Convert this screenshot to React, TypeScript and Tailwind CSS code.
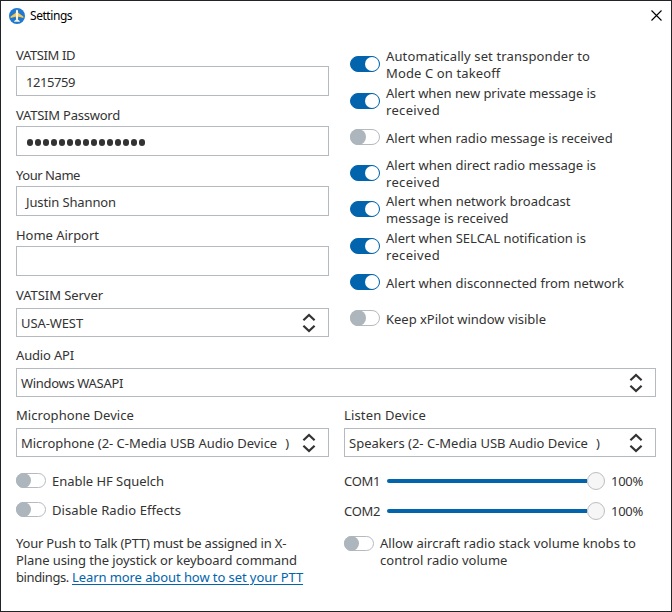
import type { ReactNode } from "react";

function Label({ children, className = "" }: { children: ReactNode; className?: string }) {
  return <div className={`h-[17px] whitespace-nowrap pt-px leading-[17px] ${className}`}>{children}</div>;
}

function TextField({ label, labelClass, children }: { label: string; labelClass: string; children?: ReactNode }) {
  return (
    <div className="flex h-[60px] flex-col gap-[3px]">
      <Label className={labelClass}>{label}</Label>
      <div className="flex h-[30px] w-[313px] items-center border border-[#b4bac0] pt-[3px] pl-[9px]">{children}</div>
    </div>
  );
}

function Chevrons() {
  return (
    <svg width="14" height="20" viewBox="0 0 14 20" fill="none" stroke="#333" strokeWidth="2.2">
      <path d="M1.4 7.2 L7 1.9 L12.6 7.2" />
      <path d="M1.4 12.8 L7 18.1 L12.6 12.8" />
    </svg>
  );
}

function SelectField({ label, labelClass = "", children }: { label: string; labelClass?: string; children: ReactNode }) {
  return (
    <div className="flex h-[60px] w-full flex-col gap-[5px]">
      <Label className={labelClass}>{label}</Label>
      <div className="flex h-[29px] items-center justify-between border border-[#b4bac0] pr-[12px] pl-1">
        <span className="flex whitespace-pre pt-[2px] leading-[17px]">{children}</span>
        <Chevrons />
      </div>
    </div>
  );
}

function Toggle({ on = false, short = false }: { on?: boolean; short?: boolean }) {
  return (
    <div
      className={`flex w-[30px] shrink-0 items-center rounded-full border ${short ? "h-[15px]" : "h-4"} ${
        on ? "justify-end border-[#0164ad] bg-[#0164ad]" : "justify-start border-[#b4bac0] bg-white"
      }`}
    >
      <div
        className={`shrink-0 rounded-full ${
          on ? "size-[14px] bg-white" : short ? "-ml-px size-[15px] bg-[#adb5bd]" : "-ml-px size-4 bg-[#adb5bd]"
        }`}
      />
    </div>
  );
}

function Option({ on, rowClass, textClass, children }: { on?: boolean; rowClass: string; textClass: string; children: ReactNode }) {
  return (
    <div className={`flex items-start gap-[6px] ${rowClass}`}>
      <div className="pt-[8px]">
        <Toggle on={on} />
      </div>
      <div className={`whitespace-nowrap leading-[17px] ${textClass}`}>{children}</div>
    </div>
  );
}

function Volume({ name }: { name: string }) {
  return (
    <div className="flex h-[30px] items-center">
      <span className="w-[43px] pt-px tracking-[-0.33px]">{name}</span>
      <div className="flex w-[218px] items-center">
        <div className="h-1 flex-1 rounded-l-full bg-[#0164ad]" />
        <div className="size-[18px] rounded-full border border-[#bdbebf] bg-[#f6f6f6]" />
      </div>
      <span className="ml-[6px] pt-px tracking-[-0.28px]">100%</span>
    </div>
  );
}

export default function App() {
  return (
    <div className="flex h-[612px] w-[672px] flex-col border border-[#222326] bg-white font-['Noto_Sans',sans-serif] text-[13px] leading-[17px] text-[#333]">
      <header className="flex h-[45px] items-start justify-between pt-[6px] pr-[9px] pl-2">
        <div className="flex items-center gap-[5px]">
          <svg width="16" height="16" viewBox="0 0 16 16">
            <circle cx="8" cy="8" r="8" fill="#1f78d1" />
            <path d="M7.2 8.6 L1.6 10 V8.6 L7.2 4.6 Z M8.8 8.6 L14.4 10 V8.6 L8.8 4.6 Z" fill="#f6c84c" />
            <path d="M8 1.5 C8.9 2 9.1 3 9.1 4 V9.5 L8.8 11.6 L10.8 13 V13.8 H5.2 V13 L7.2 11.6 L6.9 9.5 V4 C6.9 3 7.1 2 8 1.5 Z" fill="#fff4d6" />
          </svg>
          <span className="pt-px text-[12px] leading-[16px] tracking-[-0.44px] text-black">Settings</span>
        </div>
        <svg className="mt-[3px]" width="11" height="11" viewBox="0 0 11 11" stroke="#000" strokeWidth="1.1">
          <path d="M0.5 0.5 L10.5 10.5 M10.5 0.5 L0.5 10.5" />
        </svg>
      </header>

      <main className="flex flex-col px-[15px]">
        <div className="flex h-[300px] justify-between">
          <div className="w-[313px]">
            <TextField label="VATSIM ID" labelClass="tracking-[-0.39px]">
              <span className="tracking-[-0.44px]">1215759</span>
            </TextField>
            <TextField label="VATSIM Password" labelClass="tracking-[-0.23px]">
              <span className="flex gap-[2px] pl-[0.6px]">
                {Array.from({ length: 15 }, (_, i) => (
                  <i key={i} className="h-[6.6px] w-[6px] rounded-full bg-[#333]" />
                ))}
              </span>
            </TextField>
            <TextField label="Your Name" labelClass="tracking-[-0.45px]">
              <span className="tracking-[-0.12px]">Justin Shannon</span>
            </TextField>
            <TextField label="Home Airport" labelClass="tracking-[-0.03px]" />
            <SelectField label="VATSIM Server" labelClass="tracking-[-0.06px]">
              <span className="tracking-[-0.1px]">USA-WEST</span>
            </SelectField>
          </div>
          <div className="w-[306px] pt-[2px]">
            <Option on rowClass="h-[37px]" textClass="tracking-[0.12px]">Automatically set transponder to<br />Mode C on takeoff</Option>
            <Option on rowClass="h-[36px]" textClass="tracking-[-0.05px]">Alert when new private message is<br /><span className="tracking-[0.34px]">received</span></Option>
            <Option rowClass="h-[36px]" textClass="pt-[9px]">Alert when radio message is received</Option>
            <Option on rowClass="h-[36px]" textClass="">Alert when direct radio message is<br /><span className="tracking-[0.34px]">received</span></Option>
            <Option on rowClass="h-[37px]" textClass="tracking-[0.02px]">Alert when network broadcast<br />message is received</Option>
            <Option on rowClass="h-[36px]" textClass="tracking-[0.02px]">Alert when SELCAL notification is<br /><span className="tracking-[0.34px]">received</span></Option>
            <Option on rowClass="h-[36px]" textClass="pt-[9px] tracking-[0.01px]">Alert when disconnected from network</Option>
            <Option rowClass="h-[36px]" textClass="pt-[9px] tracking-[-0.02px]">Keep xPilot window visible</Option>
          </div>
        </div>

        <SelectField label="Audio API" labelClass="tracking-[-0.17px]">
          <span className="tracking-[-0.32px]">Windows WASAPI</span>
        </SelectField>

        <div className="grid grid-cols-[313px_312px] gap-[15px]">
          <SelectField label="Microphone Device" labelClass="tracking-[0.05px]">
            <span className="tracking-[-0.02px]">Microphone (2- C-Media USB Audio Device</span>
            <span className="ml-[8px]">)</span>
          </SelectField>
          <SelectField label="Listen Device" labelClass="tracking-[0.16px]">
            Speakers (2- C-Media USB Audio Device<span className="ml-[8px]">)</span>
          </SelectField>
        </div>

        <div className="grid grid-cols-[313px_312px] gap-[15px]">
          <div>
            <div className="flex h-[29px] items-center gap-[6px]">
              <Toggle short />
              <span className="pt-px tracking-[-0.03px]">Enable HF Squelch</span>
            </div>
            <div className="flex h-[29px] items-center gap-[6px]">
              <Toggle short />
              <span className="pt-px tracking-[0.09px]">Disable Radio Effects</span>
            </div>
            <p className="mt-[11px] whitespace-nowrap">
              <span className="tracking-[-0.2px]">Your Push to Talk (PTT) must be assigned in X-</span>
              <br />
              <span className="tracking-[-0.09px]">Plane using the joystick or keyboard command</span>
              <br />
              <span className="tracking-[-0.39px]">bindings. </span>
              <a className="tracking-[-0.08px] text-[#0164ad] underline underline-offset-2">Learn more about how to set your PTT</a>
            </p>
          </div>
          <div>
            <Volume name="COM1" />
            <Volume name="COM2" />
            <div className="mt-[9px] flex items-start gap-[6px]">
              <div className="pt-px">
                <Toggle short />
              </div>
              <p className="whitespace-nowrap tracking-[0.03px]">
                Allow aircraft radio stack volume knobs to<br />control radio volume
              </p>
            </div>
          </div>
        </div>
      </main>
    </div>
  );
}
